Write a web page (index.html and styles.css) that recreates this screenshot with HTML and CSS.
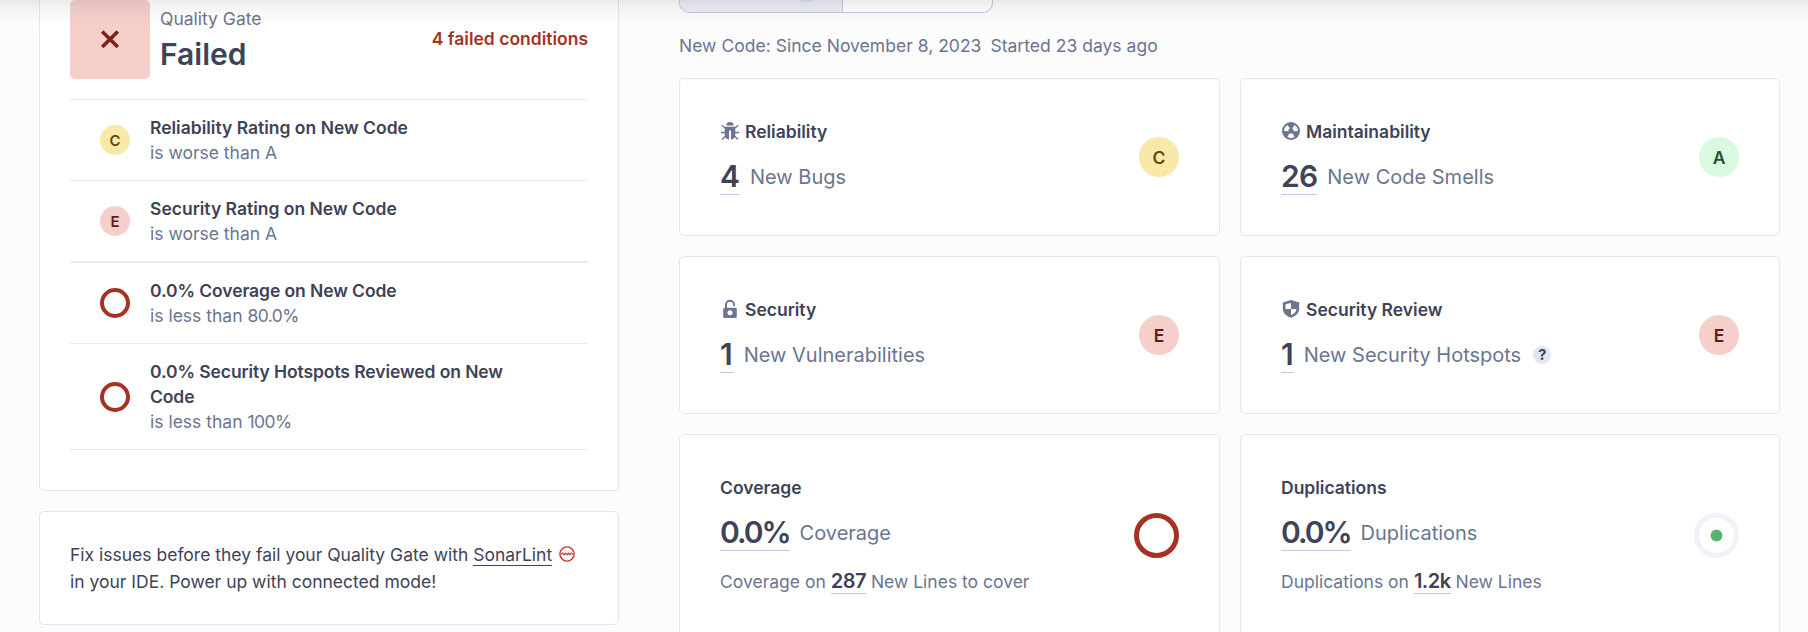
FILE: index.html
```html
<!DOCTYPE html>
<html lang="en">
<head>
<meta charset="utf-8">
<title>Project overview</title>
<link rel="stylesheet" href="styles.css">
</head>
<body>
<div class="top-shadow"></div>
<main class="page">
  <aside class="side">
    <section class="card gate">
      <header class="gate-head">
        <div class="gate-icon">
          <svg width="20" height="20" viewBox="0 0 20 20"><path d="M2.2 1.400 17.8 17M17.8 1.400 2.2 17" stroke="#7d2318" stroke-width="3.600" fill="none"/></svg>
        </div>
        <div class="gate-title"><span class="muted">Quality Gate</span><strong>Failed</strong></div>
        <span class="gate-count">4 failed conditions</span>
      </header>
      <ul class="conditions">
        <li><span class="rating small c">C</span><div><b>Reliability Rating on New Code</b><span>is worse than A</span></div></li>
        <li class="thick"><span class="rating small e">E</span><div><b>Security Rating on New Code</b><span>is worse than A</span></div></li>
        <li><span class="ring small"></span><div><b class="snug">0.0% Coverage on New Code</b><span>is less than <em class="pct">80.0%</em></span></div></li>
        <li><span class="ring small"></span><div><b class="snug">0.0% Security Hotspots Reviewed on New Code</b><span>is less than <em class="pct">100%</em></span></div></li>
      </ul>
    </section>
    <section class="card promo">
      Fix issues before they fail your Quality Gate with <a class="promo-link">SonarLint</a><svg class="lint" width="16" height="16" viewBox="0 0 16 16" fill="none" stroke="#c9302f"><circle cx="8" cy="8" r="7.1" stroke-width="1.4"/><path d="M1.5 8h1.3l1-1 1.4 1.8L6.600 7.200 8 8.800 9.400 7.200 10.800 8.800 12.200 7l1 1h1.300" stroke-width="1.1"/></svg><br>in your IDE. Power up with connected mode!
    </section>
  </aside>
  <section class="main">
    <div class="tabs"><span class="tab active"><i class="tab-count"></i></span><span class="tab"></span></div>
    <p class="period"><span>New Code: Since November 8, 2023</span><span>Started 23 days ago</span></p>
    <div class="grid">
      <article class="card measure">
        <div>
          <h3><svg width="20" height="20" viewBox="0 0 20 20"><path d="M6.300 4.600a3.700 3.500 0 0 1 7.400 0z" fill="#6a7590"/><path d="M4.700 5.700h10.600v7.800a5 5 0 0 1-4.300 5V9.500H9v9a5 5 0 0 1-4.300-5z" fill="#6a7590"/><path d="M1.800 4.200 5 7M18.200 4.200 15 7M1 11.500h4M19 11.500h-4M2 18.500l3.500-3.500M18 18.500 14.500 15" stroke="#6a7590" stroke-width="1.300"/></svg>Reliability</h3>
          <p class="value"><a>4</a><span>New Bugs</span></p>
        </div>
        <span class="rating c">C</span>
      </article>
      <article class="card measure">
        <div>
          <h3><svg width="20" height="20" viewBox="0 0 20 20"><circle cx="10" cy="10" r="9" fill="#6a7590"/><g fill="#fff"><path id="blade" d="M8.400 12.200 6.400 16a7 7 0 0 0 7.200 0l-2-3.800a2.800 2.800 0 0 1-3.200 0z"/><use href="#blade" transform="rotate(120 10 10)"/><use href="#blade" transform="rotate(240 10 10)"/></g></svg>Maintainability</h3>
          <p class="value"><a class="tight">26</a><span>New Code Smells</span></p>
        </div>
        <span class="rating a">A</span>
      </article>
      <article class="card measure">
        <div>
          <h3><svg width="20" height="20" viewBox="0 0 20 20"><path d="M6 9V5.800a4 4 0 0 1 8 0V7" fill="none" stroke="#6a7590" stroke-width="2"/><rect x="3.200" y="8.700" width="13.600" height="10.300" rx="1.500" fill="#6a7590"/><circle cx="10" cy="13.700" r="2.500" fill="#fff"/></svg>Security</h3>
          <p class="value"><a class="one">1</a><span>New Vulnerabilities</span></p>
        </div>
        <span class="rating e">E</span>
      </article>
      <article class="card measure">
        <div>
          <h3><svg width="20" height="20" viewBox="0 0 20 20"><path d="M10 1 18.200 3.500v6.300c0 4.200-3.400 7.400-8.200 9-4.800-1.600-8.200-4.800-8.200-9V3.500z" fill="#6a7590"/><path d="M10 4v6H4.500V5.300zM10 10h5.500c-.3 3-2.500 5-5.500 6z" fill="#fff"/></svg>Security Review</h3>
          <p class="value"><a>1</a><span>New Security Hotspots</span><i class="help">?</i></p>
        </div>
        <span class="rating e">E</span>
      </article>
      <article class="card measure tall">
        <div>
          <h3>Coverage</h3>
          <p class="value"><a class="percent">0.0%</a><span>Coverage</span></p>
          <p class="lines">Coverage on <a>287</a> New Lines to cover</p>
        </div>
        <span class="ring"></span>
      </article>
      <article class="card measure tall">
        <div>
          <h3>Duplications</h3>
          <p class="value"><a class="percent">0.0%</a><span>Duplications</span></p>
          <p class="lines">Duplications on <a>1.2k</a> New Lines</p>
        </div>
        <span class="ring dup"></span>
      </article>
    </div>
  </section>
</main>
</body>
</html>
```

FILE: styles.css
```css
* { box-sizing: border-box; }
html, body { height: 100%; }
body {
  margin: 0;
  overflow: hidden;
  background: #fcfcfd;
  color: #3e4357;
  font: 400 17.5px/25px Inter, "Liberation Sans", sans-serif;
}
p, h3, ul { margin: 0; padding: 0; }
em, i { font-style: normal; }
.top-shadow {
  position: absolute;
  inset: 0 0 auto;
  height: 26px;
  background: linear-gradient(rgba(29, 33, 47, .09), rgba(29, 33, 47, .035) 40%, rgba(29, 33, 47, 0));
  z-index: 2;
}
.page {
  display: grid;
  grid-template-columns: 580px 1101px;
  column-gap: 60px;
  padding-left: 39px;
  height: 632px;
  overflow: hidden;
}
.card { background: #fff; border: 1px solid #e1e6f3; border-radius: 5px; }
.muted { color: #6a7590; }

.side { display: flex; flex-direction: column; gap: 20px; }
.gate { height: 491px; padding: 0 30px; border-top: 0; border-radius: 0 0 5px 5px; }
.gate-head { display: flex; align-items: flex-start; height: 99px; }
.gate-icon {
  width: 80px; height: 79px; border-radius: 5px;
  background: #f6cfca;
  display: flex; align-items: center; justify-content: center;
}
.gate-title { display: flex; flex-direction: column; padding: 6px 0 0 10px; flex: 1; }
.gate-title strong { font-size: 30px; line-height: 40px; font-weight: 600; margin-top: 3px; }
.gate-count { color: #a63224; font-weight: 600; margin-top: 26px; }
.conditions { list-style: none; border-top: 1px solid #ebebed; }
.conditions li {
  display: flex; align-items: center; gap: 20px;
  padding: 15px 60px 15px 30px;
  border-bottom: 1px solid #ebebed;
}
.conditions li.thick { border-bottom-width: 2px; }
.conditions div { display: flex; flex-direction: column; }
.conditions b { font-weight: 600; }
.conditions .snug { letter-spacing: -.09px; }
.conditions div span { color: #6a7590; }
.pct { letter-spacing: -.55px; }
.promo { height: 114px; padding: 29px 20px 29px 30px; line-height: 27px; }
.promo-link { border-bottom: 1px solid #3e4357; }
.lint { margin-left: 7px; vertical-align: -1px; }

.rating {
  flex: none;
  width: 40px; height: 40px; border-radius: 50%;
  display: flex; align-items: center; justify-content: center;
  font-weight: 600;
}
.rating.small { width: 30px; height: 30px; font-size: 15px; }
.rating.c { background: #f9e9a9; color: #66450c; }
.rating.e { background: #f6cfca; color: #5d1f17; }
.rating.a { background: #dafae0; color: #215032; }
.ring {
  flex: none;
  width: 45px; height: 45px;
  border: 5px solid #a63224; border-radius: 50%;
}
.ring.small { width: 30px; height: 30px; border-width: 4px; }
.ring.dup {
  border-color: #eff2f9;
  border-width: 5.500px;
  background: radial-gradient(circle, #55b46f 5.500px, transparent 6.300px);
}

.main { display: flex; flex-direction: column; }
.tabs {
  display: flex; width: 314px; height: 13px;
  border: 1px solid #c3cbe0; border-top: 0;
  border-radius: 0 0 10px 10px;
  background: #fff; overflow: hidden;
}
.tab.active {
  width: 163px; background: #ecedf5; border-right: 1px solid #c3cbe0;
  display: flex; align-items: flex-start; justify-content: flex-end; padding-right: 21px;
}
.tab-count { flex: none; width: 28px; height: 24px; margin-top: -22px; background: #d8deec; border-radius: 12px; }
.period { display: flex; gap: 9px; color: #6a7590; margin-top: 20px; letter-spacing: .02px; }
.grid {
  display: grid; grid-template-columns: 541px 540px; gap: 20px;
  grid-template-rows: 158px 158px 240px;
  margin-top: 20px;
}
.measure { display: flex; align-items: center; justify-content: space-between; padding: 0 40px; }
.measure > div { margin-top: -1px; }
.measure h3 { display: flex; align-items: center; gap: 5px; font-size: 17.500px; font-weight: 600; line-height: 25px; }
.value { display: flex; align-items: center; gap: 10px; margin-top: 15px; font-size: 20px; line-height: 30px; color: #6a7590; }
.value a { font-size: 30px; line-height: 35px; font-weight: 600; color: #3e4357; border-bottom: 1px solid #c3cbe0; }
.value .tight { letter-spacing: -.8px; }
.value .one { padding-right: 1px; }
.value .percent { letter-spacing: -2px; }
.help {
  width: 18px; height: 18px; border-radius: 50%;
  background: #e1e6f3; color: #3e4357; margin-left: 2px;
  font: 700 14.500px/18px Inter, sans-serif; text-align: center;
}
.tall { align-items: flex-start; padding-top: 40px; }
.tall > div { margin-top: 0; }
.tall .ring { margin-top: 38px; }
.lines { margin-top: 18px; color: #6a7590; }
.lines a { font-size: 20px; font-weight: 600; letter-spacing: -.5px; color: #3e4357; border-bottom: 1px solid #c3cbe0; line-height: 25px; }
```
